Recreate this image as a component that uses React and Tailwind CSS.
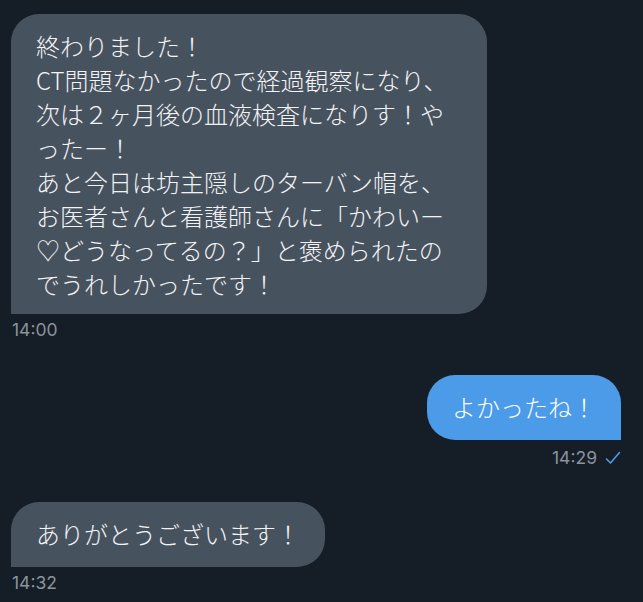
import React from "react";

const firstLines = [
  "終わりました！",
  "CT問題なかったので経過観察になり、",
  "次は２ヶ月後の血液検査になりす！や",
  "ったー！",
  "あと今日は坊主隠しのターバン帽を、",
  "お医者さんと看護師さんに「かわいー",
  "♡どうなってるの？」と褒められたの",
  "でうれしかったです！",
];

export default function App() {
  return (
    <div className="w-[643px] h-[602px] bg-[#151d27] overflow-hidden pt-[14px] pl-[11px] pr-[22px] font-['Noto_Sans_CJK_JP','Noto_Sans',sans-serif]">
      {/* incoming */}
      <div className="flex flex-col items-start">
        <div className="w-[476px] bg-[#47525f] text-[#f2f3f5] text-[24px] font-light leading-[34px] rounded-[28px] rounded-bl-none pl-[25px] pt-[15px] pb-[13px] whitespace-nowrap">
          {firstLines.map((line) => (
            <div key={line}>{line}</div>
          ))}
        </div>
        <div className="mt-[6px] pl-[1px] text-[17.5px] leading-[20px] text-[#8b939c] font-['Inter','Liberation_Sans',sans-serif]">
          14:00
        </div>
      </div>

      {/* outgoing */}
      <div className="flex flex-col items-end mt-[35px]">
        <div className="bg-[#4c9be8] text-white text-[24px] font-light leading-[34px] rounded-[28px] rounded-br-none px-[25px] pt-[15px] pb-[16px] whitespace-nowrap">
          よかったね！
        </div>
        <div className="mt-[8px] flex items-center gap-[8px] text-[17.5px] leading-[20px] text-[#8b939c] font-['Inter','Liberation_Sans',sans-serif]">
          <span>14:29</span>
          <svg width="16" height="14" viewBox="0 0 16 14" fill="none">
            <path d="M1.5 8 L5.5 12 L14.5 1.5" stroke="#4c9be8" strokeWidth="1.6" strokeLinecap="round" strokeLinejoin="round" />
          </svg>
        </div>
      </div>

      {/* incoming */}
      <div className="flex flex-col items-start mt-[34px]">
        <div className="bg-[#47525f] text-[#f2f3f5] text-[24px] font-light leading-[34px] rounded-[28px] rounded-bl-none px-[25px] pt-[15px] pb-[16px] whitespace-nowrap">
          ありがとうございます！
        </div>
        <div className="mt-[6px] pl-[1px] text-[17.5px] leading-[20px] text-[#8b939c] font-['Inter','Liberation_Sans',sans-serif]">
          14:32
        </div>
      </div>
    </div>
  );
}
